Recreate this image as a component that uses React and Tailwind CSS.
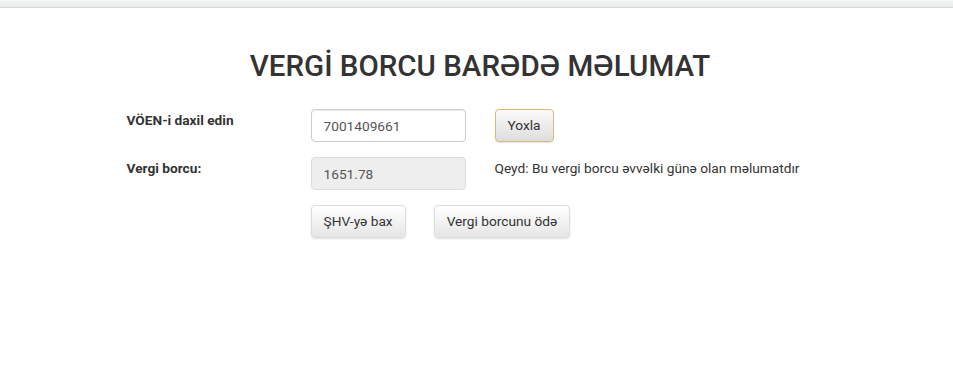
import { useState } from "react";

const App = () => {
  const [voen, setVoen] = useState("7001409661");

  return (
    <div className="min-h-screen bg-white font-['Roboto',sans-serif] text-[#333]">
      {/* top strip */}
      <div className="h-[8px] bg-gradient-to-b from-[#f4f5f4] to-[#e9ecea] border-b border-[#d3dad6]" />

      <h1 className="mt-[40px] pl-[7px] text-center text-[29.5px] leading-[36px] font-medium text-[#333]">
        VERGİ BORCU BARƏDƏ MƏLUMAT
      </h1>

      <div className="max-w-[700px] mx-auto mt-[25px] flex flex-col gap-[15px] text-[13.7px]">
        {/* VOEN row */}
        <div className="flex items-start">
          <label className="w-[184px] pt-[1px] font-bold leading-[20px]">
            VÖEN-i daxil edin
          </label>
          <input
            value={voen}
            onChange={(e) => setVoen(e.target.value)}
            className="w-[155px] h-[33px] px-[12px] border border-[#ccc] rounded-[4px] text-[#555] outline-none shadow-[inset_0_1px_1px_rgba(0,0,0,0.075)]"
          />
          <button className="ml-[29px] h-[33px] px-[12px] rounded-[4px] border border-[#d8bb7a] bg-gradient-to-b from-[#fafafa] to-[#dedede] text-[#333] shadow-[0_1px_1px_rgba(0,0,0,0.1)]">
            Yoxla
          </button>
        </div>

        {/* debt row */}
        <div className="flex items-start">
          <label className="w-[184px] pt-[1px] font-bold leading-[20px]">
            Vergi borcu:
          </label>
          <input
            value="1651.78"
            readOnly
            className="w-[155px] h-[33px] px-[12px] border border-[#ddd] rounded-[4px] bg-[#eee] text-[#555] outline-none"
          />
          <p className="ml-[29px] pt-[1px] leading-[20px] text-[#333]">
            Qeyd: Bu vergi borcu əvvəlki günə olan məlumatdır
          </p>
        </div>

        {/* actions */}
        <div className="flex items-start pl-[184px] gap-[28px]">
          <button className="h-[33px] px-[12px] rounded-[4px] border border-[#ddd] bg-gradient-to-b from-[#fff] to-[#e6e6e6] text-[#333] shadow-[0_1px_2px_rgba(0,0,0,0.12)]">
            ŞHV-yə bax
          </button>
          <button className="h-[33px] px-[12px] rounded-[4px] border border-[#ddd] bg-gradient-to-b from-[#fff] to-[#e6e6e6] text-[#333] shadow-[0_1px_2px_rgba(0,0,0,0.12)]">
            Vergi borcunu ödə
          </button>
        </div>
      </div>
    </div>
  );
};

export default App;
